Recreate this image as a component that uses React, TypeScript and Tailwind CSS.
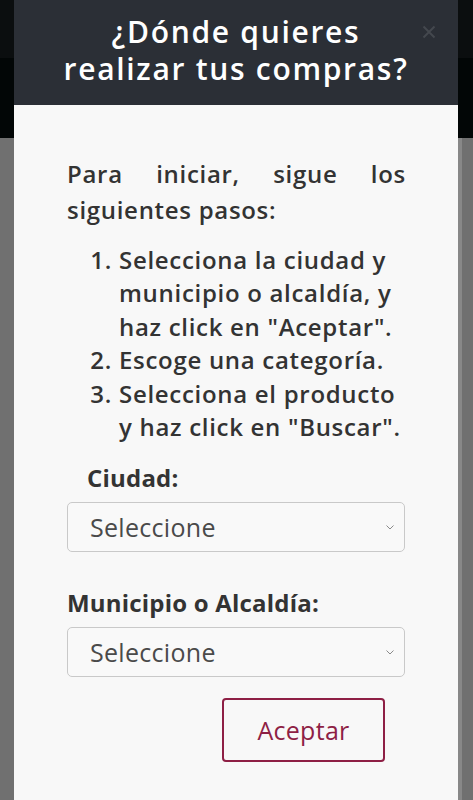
import React from "react";

const font = { fontFamily: '"Open Sans", "Noto Sans", sans-serif' };

function Chevron() {
  return (
    <svg width="8" height="5" viewBox="0 0 8 5" className="absolute right-[10px] top-[22px]">
      <path d="M0.5 0.5 L4 4 L7.5 0.5" fill="none" stroke="#8a8a8a" strokeWidth="1" />
    </svg>
  );
}

function Select() {
  return (
    <div className="relative h-[50px] w-[338px] rounded-[5px] border border-[#c9c9c9] bg-[#f9f9f9] flex items-center pl-[22px]">
      <span className="text-[25px] tracking-[0.3px] text-[#4a4a4a]">Seleccione</span>
      <Chevron />
    </div>
  );
}

export default function App() {
  const items: [string, string[]][] = [
    ["1.", ["Selecciona la ciudad y", "municipio o alcaldía, y", 'haz click en "Aceptar".']],
    ["2.", ["Escoge una categoría."]],
    ["3.", ["Selecciona el producto", 'y haz click en "Buscar".']],
  ];
  return (
    <div className="relative w-full h-[800px] overflow-hidden bg-[#707070]" style={font}>
      <div className="flex flex-col">
        <div className="h-[58px] bg-[#0b0e0f]" />
        <div className="h-[80px] bg-[#020606]" />
      </div>
      <div className="absolute right-[11px] top-[138px] w-[4px] h-[662px] bg-[#888888]" />
      <div className="absolute left-[14px] top-0 w-[444px] h-[820px] bg-[#f8f8f8] flex flex-col">
        <div className="relative h-[105px] pb-[5px] bg-[#2b2f36] flex items-center justify-center">
          <h1 className="text-white text-[30px] tracking-[1.7px] font-semibold leading-[37px] text-center">
            ¿Dónde quieres
            <br />
            realizar tus compras?
          </h1>
          <svg width="14" height="14" viewBox="0 0 14 14" className="absolute right-[22px] top-[25px]">
            <path d="M1.5 1.5 L12.5 12.5 M12.5 1.5 L1.5 12.5" stroke="#44484e" strokeWidth="2" />
          </svg>
        </div>
        <div className="pl-[53px] pr-[52px] pt-[51px] text-[#333333]">
          <p className="text-[24px] tracking-[0.7px] font-semibold leading-[36px] text-justify [text-align-last:left]">
            Para iniciar, sigue los siguientes pasos:
          </p>
          <div className="mt-[15px] text-[24px] tracking-[0.7px] font-semibold leading-[33.4px]">
            {items.map(([n, lines]) => (
              <div key={n} className="grid grid-cols-[52px_1fr]">
                <span className="text-right pr-[7px]">{n}</span>
                <span>
                  {lines.map((l, i) => (
                    <React.Fragment key={i}>
                      {l}
                      {i < lines.length - 1 && <br />}
                    </React.Fragment>
                  ))}
                </span>
              </div>
            ))}
          </div>
          <div className="mt-[20px] pl-[20px] text-[24px] tracking-[0.2px] font-bold leading-[30px]">Ciudad:</div>
          <div className="mt-[9px]">
            <Select />
          </div>
          <div className="mt-[36px] text-[24px] tracking-[0.2px] font-bold leading-[30px]">Municipio o Alcaldía:</div>
          <div className="mt-[9px]">
            <Select />
          </div>
          <div className="mt-[21px] pl-[155px]">
            <button className="w-[163px] h-[64px] rounded-[4px] border-2 border-[#8e1f45] text-[#8e1f45] text-[25px] tracking-[0.3px]">
              Aceptar
            </button>
          </div>
        </div>
      </div>
    </div>
  );
}
